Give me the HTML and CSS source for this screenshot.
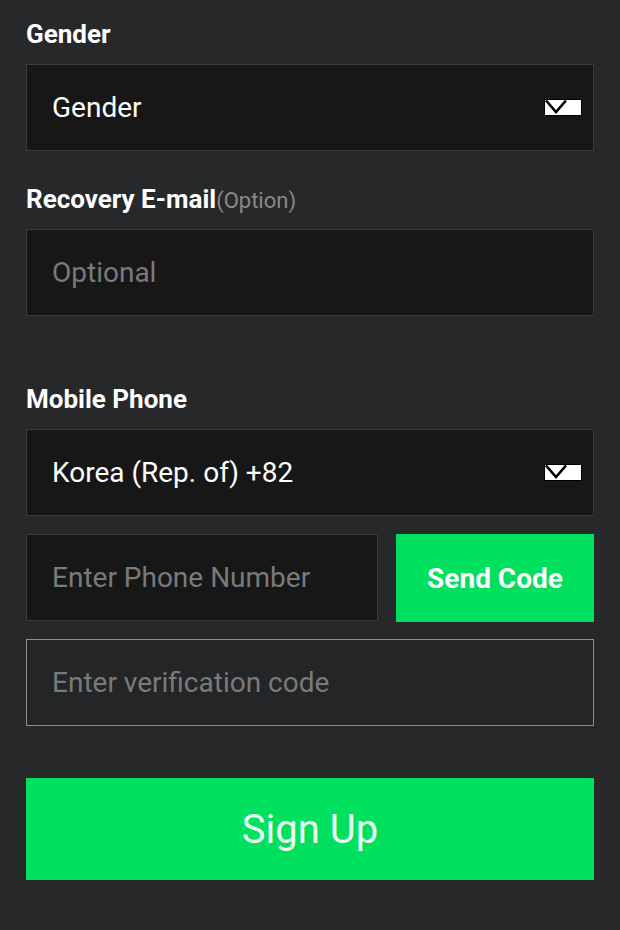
FILE: index.html
```html
<!DOCTYPE html>
<html>
<head>
<meta charset="utf-8">
<link rel="stylesheet" href="styles.css">
</head>
<body>
<form class="form">
  <div class="label first">Gender</div>
  <div class="field select">
    <span class="value">Gender</span>
    <svg class="caret" width="36" height="15" viewBox="0 0 36 15"><rect x="0" y="0" width="36" height="15" fill="#fff"/><polyline points="1,0.5 11,12 21,0.5" fill="none" stroke="#000" stroke-width="2.6"/></svg>
  </div>

  <div class="label">Recovery E-mail<span class="opt">(Option)</span></div>
  <div class="field"><span class="placeholder">Optional</span></div>

  <div class="label mobile">Mobile Phone</div>
  <div class="field select">
    <span class="value">Korea (Rep. of) +82</span>
    <svg class="caret" width="36" height="15" viewBox="0 0 36 15"><rect x="0" y="0" width="36" height="15" fill="#fff"/><polyline points="1,0.5 11,12 21,0.5" fill="none" stroke="#000" stroke-width="2.6"/></svg>
  </div>

  <div class="phone-row">
    <div class="field phone"><span class="placeholder">Enter Phone Number</span></div>
    <button type="button" class="send">Send Code</button>
  </div>

  <div class="field verify"><span class="placeholder">Enter verification code</span></div>

  <button type="button" class="signup">Sign Up</button>
</form>
</body>
</html>
```

FILE: styles.css
```css
html, body {
  margin: 0;
  padding: 0;
}
body {
  background: #27282a;
  font-family: Roboto, "Liberation Sans", sans-serif;
  color: #fff;
  width: 620px;
  height: 930px;
  overflow: hidden;
}
.form {
  padding: 0 26px;
  display: flex;
  flex-direction: column;
}
.label {
  font-size: 26px;
  font-weight: 700;
  line-height: 30px;
  height: 30px;
  margin-top: 33px;
  margin-bottom: 15px;
  color: #fff;
}
.label.first {
  margin-top: 19px;
}
.label.mobile {
  margin-top: 68px;
}
.opt {
  font-size: 22px;
  font-weight: 400;
  line-height: 20px;
  color: #8a8a8a;
}
.field {
  box-sizing: border-box;
  height: 87px;
  background: #171717;
  border: 1px solid #3a3b3c;
  display: flex;
  align-items: center;
  padding: 0 12px 0 25px;
  font-size: 28px;
}
.value {
  flex: 1;
  color: #fff;
}
.placeholder {
  color: #7a7a7a;
}
.caret {
  display: block;
  outline: 1px solid #000;
}
.phone-row {
  display: flex;
  gap: 18px;
  margin-top: 18px;
}
.phone {
  flex: 1;
}
.send {
  width: 198px;
  height: 88px;
  border: none;
  background: #00e05f;
  color: #fff;
  font-family: Roboto, "Liberation Sans", sans-serif;
  font-size: 28px;
  font-weight: 700;
  padding: 0;
}
.verify {
  margin-top: 17px;
  background: #242527;
  border: 1px solid #8e8e8e;
}
.signup {
  margin-top: 52px;
  height: 102px;
  border: none;
  background: #00e05f;
  color: #eafff1;
  font-family: Roboto, "Liberation Sans", sans-serif;
  font-size: 40px;
  font-weight: 400;
  padding: 0;
}
```
